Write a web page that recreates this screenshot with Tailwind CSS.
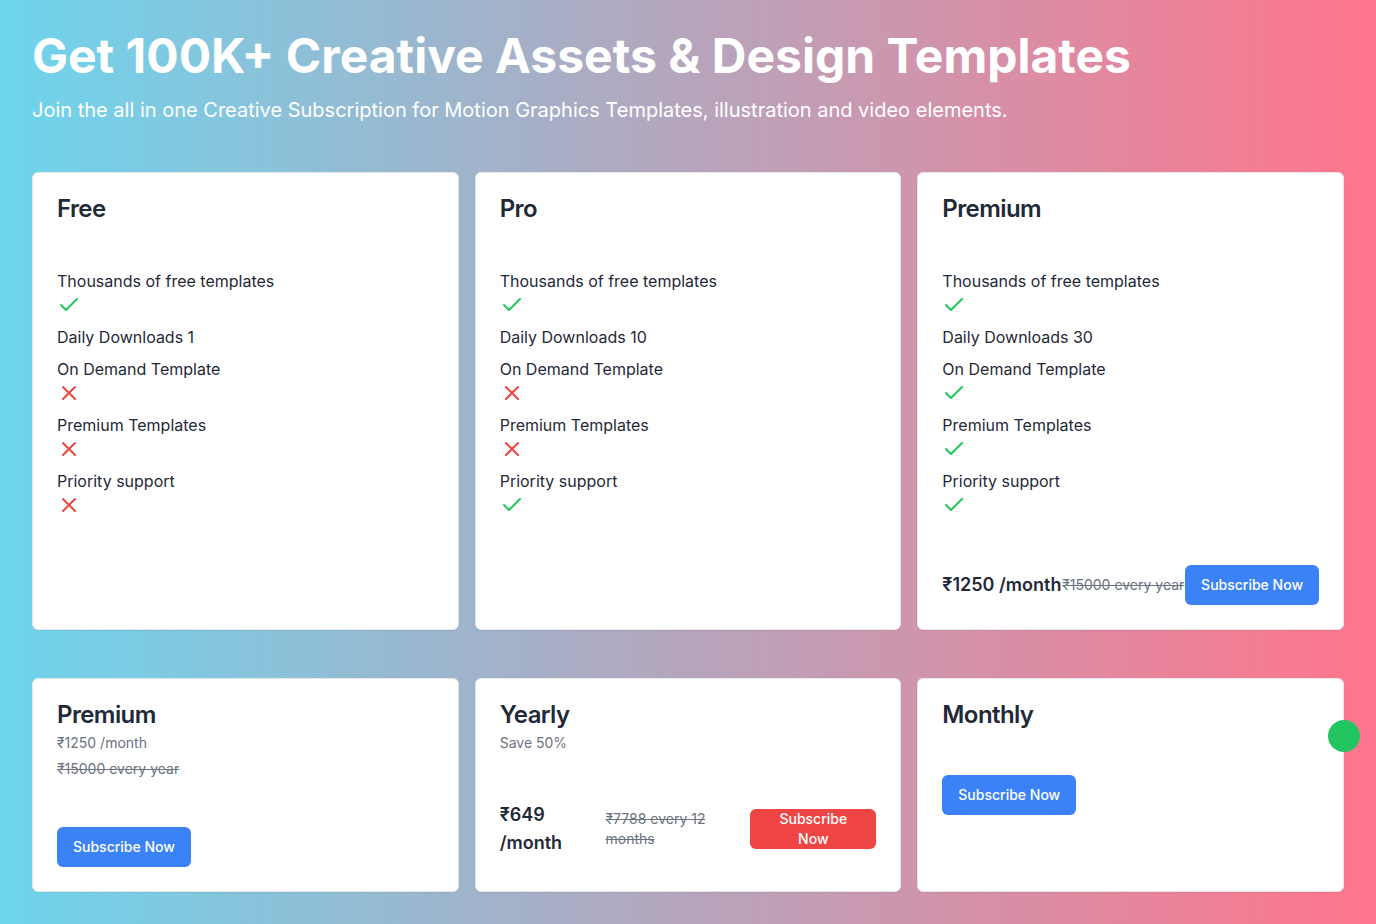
<!DOCTYPE html>
<html lang="en">
<head>
<meta charset="utf-8">
<meta name="viewport" content="width=device-width, initial-scale=1">
<title>Pricing</title>
<script src="https://cdn.jsdelivr.net/npm/@tailwindcss/browser@4"></script>
</head>
<body class="min-h-screen bg-linear-to-r/srgb from-[#6dd5ed] to-[#ff758c] font-['Inter',sans-serif] text-[#1f2937]">
<svg class="hidden" aria-hidden="true">
  <symbol id="check" viewBox="0 0 24 24"><path d="M20 6 9 17l-5-5" fill="none" stroke="currentColor" stroke-width="2" stroke-linecap="round" stroke-linejoin="round"/></symbol>
  <symbol id="cross" viewBox="0 0 24 24"><path d="M18 6 6 18M6 6l12 12" fill="none" stroke="currentColor" stroke-width="2" stroke-linecap="round" stroke-linejoin="round"/></symbol>
</svg>
<main class="p-8">
  <header class="mb-12 text-white">
    <h1 class="mb-4 text-5xl leading-[48px] font-bold">Get 100K+ Creative Assets &amp; Design Templates</h1>
    <p class="text-xl leading-7">Join the all in one Creative Subscription for Motion Graphics Templates, illustration and video elements.</p>
  </header>
  <section class="mb-12 grid grid-cols-3 gap-4">
    <article class="rounded-md border border-gray-200 bg-white shadow-xs">
      <h2 class="p-6 text-2xl leading-6 font-semibold tracking-tight">Free</h2>
      <ul class="mt-6 space-y-2 p-6 pt-0">
        <li>Thousands of free templates<svg class="block size-6 text-[#22c55e]"><use href="#check"/></svg></li>
        <li>Daily Downloads 1</li>
        <li>On Demand Template<svg class="block size-6 text-[#ef4444]"><use href="#cross"/></svg></li>
        <li>Premium Templates<svg class="block size-6 text-[#ef4444]"><use href="#cross"/></svg></li>
        <li>Priority support<svg class="block size-6 text-[#ef4444]"><use href="#cross"/></svg></li>
      </ul>
    </article>
    <article class="rounded-md border border-gray-200 bg-white shadow-xs">
      <h2 class="p-6 text-2xl leading-6 font-semibold tracking-tight">Pro</h2>
      <ul class="mt-6 space-y-2 p-6 pt-0">
        <li>Thousands of free templates<svg class="block size-6 text-[#22c55e]"><use href="#check"/></svg></li>
        <li>Daily Downloads 10</li>
        <li>On Demand Template<svg class="block size-6 text-[#ef4444]"><use href="#cross"/></svg></li>
        <li>Premium Templates<svg class="block size-6 text-[#ef4444]"><use href="#cross"/></svg></li>
        <li>Priority support<svg class="block size-6 text-[#22c55e]"><use href="#check"/></svg></li>
      </ul>
    </article>
    <article class="rounded-md border border-gray-200 bg-white shadow-xs">
      <h2 class="p-6 text-2xl leading-6 font-semibold tracking-tight">Premium</h2>
      <ul class="mt-6 space-y-2 p-6 pt-0">
        <li>Thousands of free templates<svg class="block size-6 text-[#22c55e]"><use href="#check"/></svg></li>
        <li>Daily Downloads 30</li>
        <li>On Demand Template<svg class="block size-6 text-[#22c55e]"><use href="#check"/></svg></li>
        <li>Premium Templates<svg class="block size-6 text-[#22c55e]"><use href="#check"/></svg></li>
        <li>Priority support<svg class="block size-6 text-[#22c55e]"><use href="#check"/></svg></li>
      </ul>
      <div class="mt-6 flex items-center justify-between p-6 pt-0">
        <span class="text-lg font-semibold">₹1250 /month</span>
        <span class="text-sm text-[#6b7280] line-through">₹15000 every year</span>
        <button class="h-10 rounded-md bg-[#3b82f6] px-4 text-sm font-medium text-white">Subscribe Now</button>
      </div>
    </article>
  </section>
  <section class="relative grid grid-cols-3 gap-4">
    <article class="rounded-md border border-gray-200 bg-white shadow-xs">
      <div class="space-y-1.5 p-6">
        <h2 class="text-2xl leading-6 font-semibold tracking-tight">Premium</h2>
        <p class="text-sm text-[#6b7280]">₹1250 /month</p>
        <p class="text-sm text-[#6b7280] line-through">₹15000 every year</p>
      </div>
      <div class="mt-6 p-6 pt-0">
        <button class="h-10 rounded-md bg-[#3b82f6] px-4 text-sm font-medium text-white">Subscribe Now</button>
      </div>
    </article>
    <article class="rounded-md border border-gray-200 bg-white shadow-xs">
      <div class="space-y-1.5 p-6">
        <h2 class="text-2xl leading-6 font-semibold tracking-tight">Yearly</h2>
        <p class="text-sm text-[#6b7280]">Save 50%</p>
      </div>
      <div class="mt-6 flex items-center justify-between p-6 pt-0">
        <span class="w-[63px] text-lg leading-7 font-semibold">₹649 /month</span>
        <span class="w-[102px] text-sm text-[#6b7280] line-through">₹7788 every 12 months</span>
        <button class="h-10 w-[126px] rounded-md bg-[#ef4444] px-4 text-sm font-medium text-white">Subscribe Now</button>
      </div>
    </article>
    <article class="rounded-md border border-gray-200 bg-white shadow-xs">
      <h2 class="p-6 text-2xl leading-6 font-semibold tracking-tight">Monthly</h2>
      <div class="mt-6 p-6 pt-0">
        <button class="h-10 rounded-md bg-[#3b82f6] px-4 text-sm font-medium text-white">Subscribe Now</button>
      </div>
    </article>
    <div class="absolute top-[42px] -right-4 size-8 rounded-full bg-[#22c55e]"></div>
  </section>
</main>
</body>
</html>
